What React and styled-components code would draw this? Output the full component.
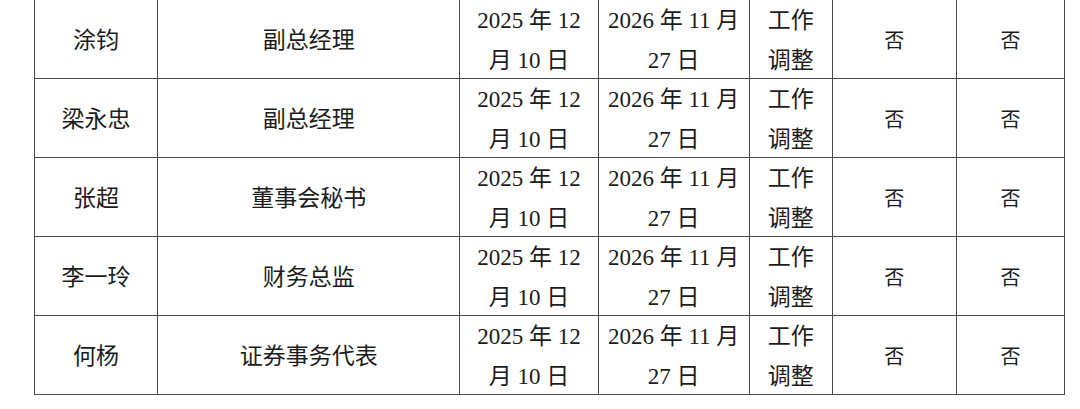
import { createGlobalStyle, styled } from "styled-components";

const GlobalStyle = createGlobalStyle`
	html, body {
		margin: 0;
		padding: 0;
		background: #ffffff;
	}
	body {
		font-family: "Liberation Serif", "Noto Sans CJK SC", serif;
		color: #1c1c1c;
	}
`;

const columns = [123, 302, 138, 151, 83, 124, 108];

const people = [
	{ name: "涂钧", title: "副总经理" },
	{ name: "梁永忠", title: "副总经理" },
	{ name: "张超", title: "董事会秘书" },
	{ name: "李一玲", title: "财务总监" },
	{ name: "何杨", title: "证券事务代表" },
];

export default function App() {
	return (
		<Page>
			<GlobalStyle />
			<Table>
				<colgroup>
					{columns.map((w, i) => (
						<col key={i} style={{ width: w }} />
					))}
				</colgroup>
				<tbody>
					{people.map((p) => (
						<Row key={p.name}>
							<Cell>{p.name}</Cell>
							<Cell>{p.title}</Cell>
							<Cell>
								<Stack>
									<Line>2025 年 12</Line>
									<Line>月 10 日</Line>
								</Stack>
							</Cell>
							<Cell>
								<Stack>
									<Line>2026 年 11 月</Line>
									<Line>27 日</Line>
								</Stack>
							</Cell>
							<Cell>
								<Stack>
									<Line>工作</Line>
									<Line>调整</Line>
								</Stack>
							</Cell>
							<Cell $small>否</Cell>
							<Cell $small>否</Cell>
						</Row>
					))}
				</tbody>
			</Table>
		</Page>
	);
}

const Page = styled.div`
	width: 1080px;
	height: 409px;
	overflow: hidden;
	padding-left: 34px;
	box-sizing: border-box;
`;

const Table = styled.table`
	border-collapse: collapse;
	table-layout: fixed;
	width: 1031px;
	margin-top: -1px;
`;

const Row = styled.tr`
	height: 78px;
`;

const Cell = styled.td`
	border: 1.6px solid #4a4a4a;
	text-align: center;
	vertical-align: middle;
	padding: 4px 0 0 0;
	font-size: ${(p) => (p.$small ? "20px" : "23px")};
	line-height: 40px;
	white-space: nowrap;
	overflow: hidden;
`;

const Stack = styled.div`
	margin: -3px 0;
`;

const Line = styled.span`
	display: block;
	line-height: 40px;
`;
